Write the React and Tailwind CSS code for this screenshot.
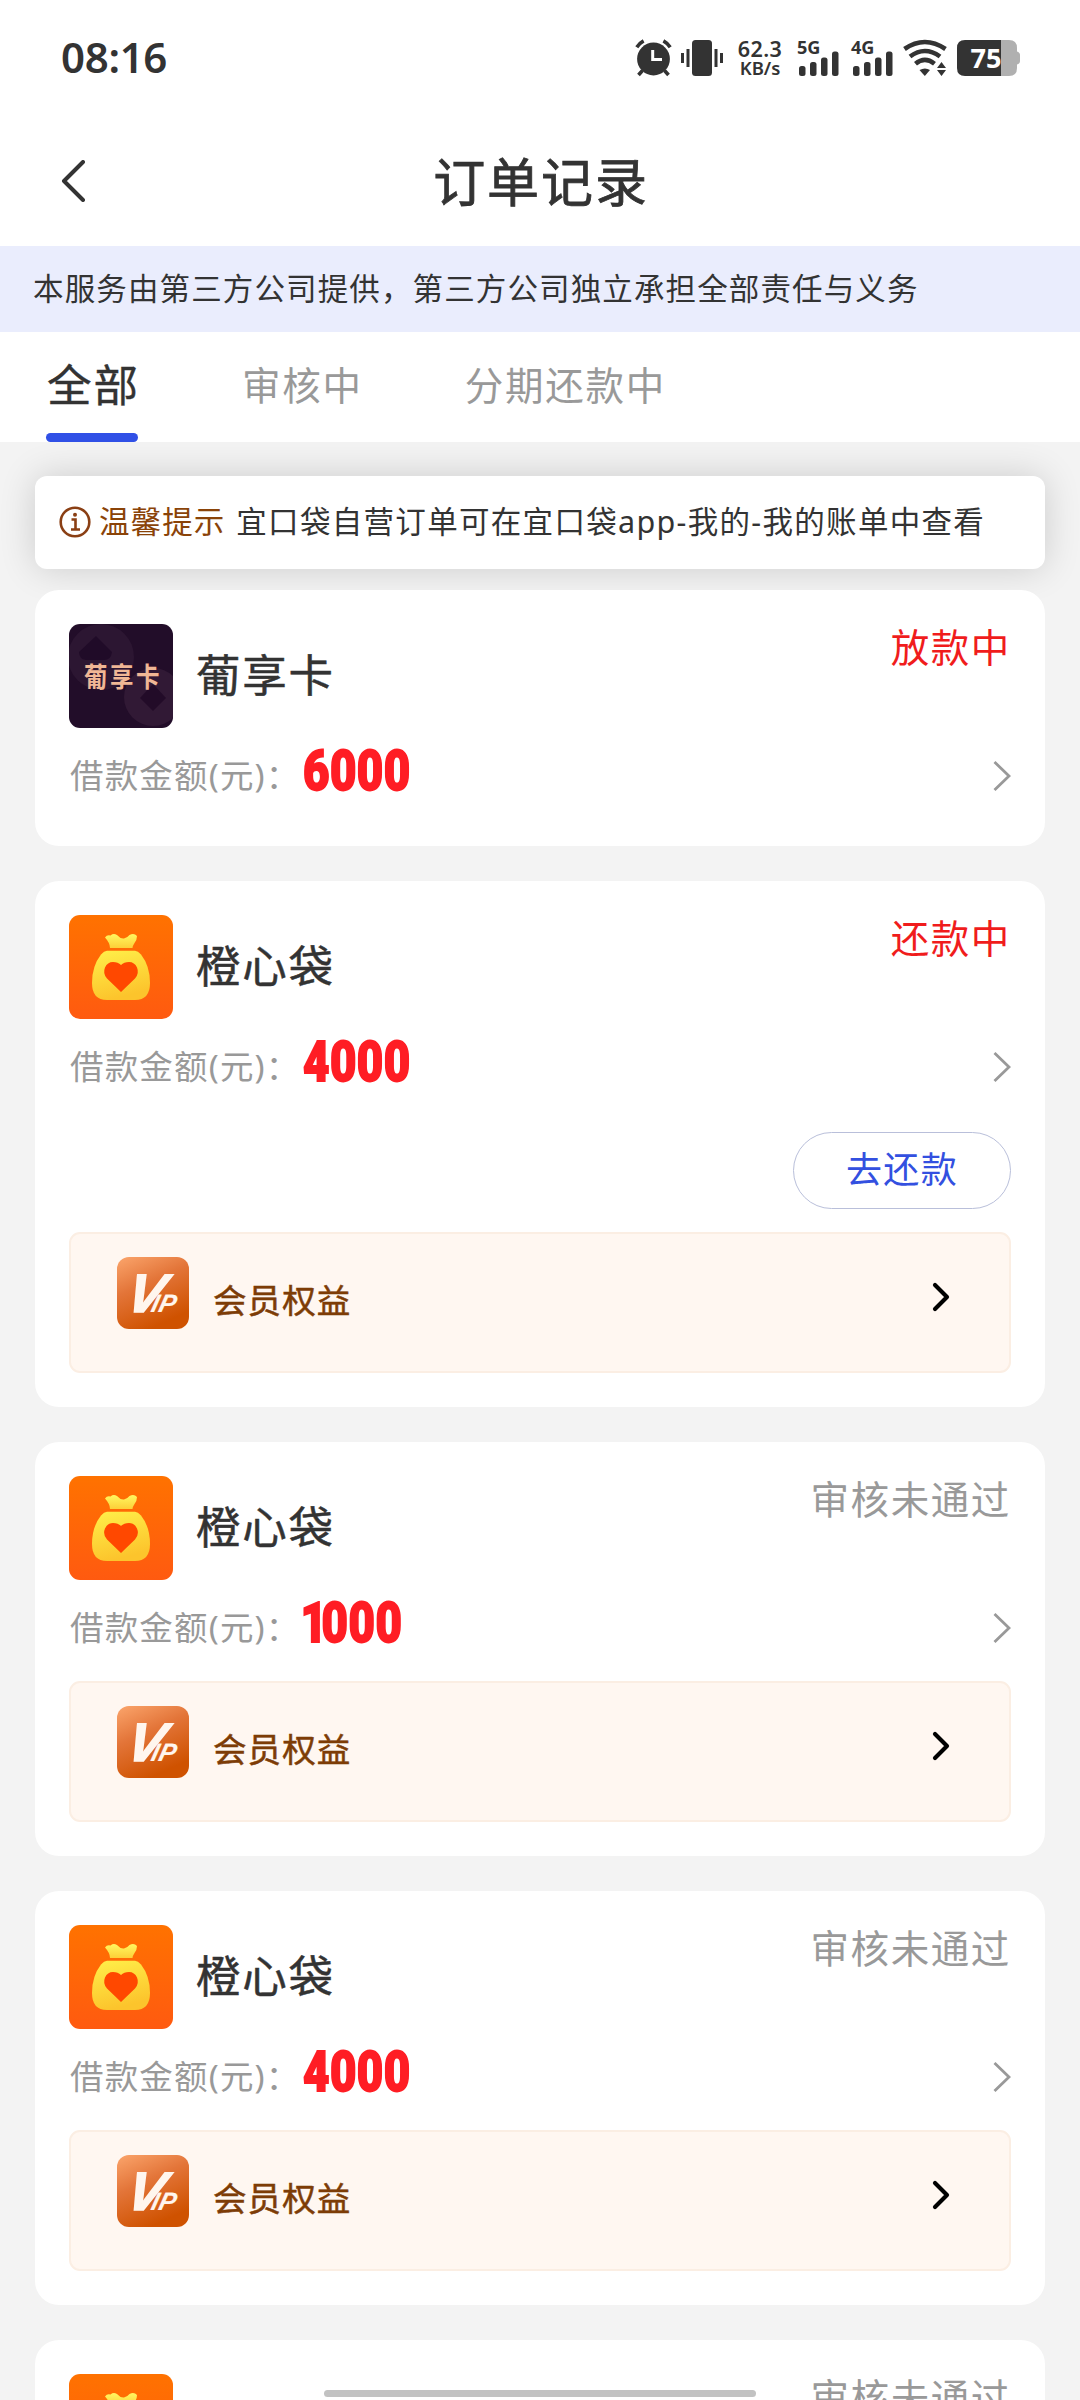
import React from 'react';

const orders = [
  { id: 1, logo: 'card', name: '葡享卡', amount: '6000', status: '放款中', active: true },
  { id: 2, logo: 'bag', name: '橙心袋', amount: '4000', status: '还款中', active: true, repay: true, vip: true },
  { id: 3, logo: 'bag', name: '橙心袋', amount: '1000', status: '审核未通过', vip: true },
  { id: 4, logo: 'bag', name: '橙心袋', amount: '4000', status: '审核未通过', vip: true },
  { id: 5, logo: 'bag', name: '橙心袋', amount: '4000', status: '审核未通过', vip: true },
];

const AlarmIcon = () => (
  <svg width="38" height="38" viewBox="0 0 38 38" fill="none" stroke="#333" strokeWidth="3.2">
    <circle cx="18.5" cy="20" r="16.4" fill="#333" stroke="none" />
    <path d="M1.800 8.200Q4.500 4 8.600 1.800M35.200 8.200Q32.500 4 28.400 1.800" strokeWidth="3.6" />
    <path d="M7.500 31.500L3.500 36M29.500 31.500L33.500 36" strokeWidth="3.6" />
    <path d="M17.700 11V20.400H27" stroke="#fff" strokeWidth="3" />
  </svg>
);

const VibrateIcon = () => (
  <svg width="42" height="38" viewBox="0 0 42 38" fill="#333">
    <rect x="11" y="1" width="20" height="36" rx="3.5" />
    <rect x="5.500" y="10" width="3" height="18" />
    <rect x="0" y="14" width="3" height="10" />
    <rect x="33.500" y="10" width="3" height="18" />
    <rect x="39" y="14" width="3" height="10" />
  </svg>
);

const Signal = ({ label }) => (
  <svg width="43" height="38" viewBox="0 0 43 38" fill="#333" overflow="visible">
    <text x="0" y="15" fontSize="18.500" fontWeight="700" fontFamily="'Noto Sans', sans-serif" textLength="23.500" lengthAdjust="spacingAndGlyphs">{label}</text>
    <rect x="2" y="27" width="6.500" height="10" rx="2.500" />
    <rect x="13" y="23" width="6.500" height="14" rx="2.500" />
    <rect x="24" y="18.500" width="6.500" height="18.500" rx="2.500" />
    <rect x="35" y="12.500" width="6.500" height="24.500" rx="2.500" />
  </svg>
);

const WifiIcon = () => (
  <svg width="45" height="38" viewBox="0 0 45 38" fill="none" stroke="#333" strokeWidth="4.600">
    <path d="M1.500 10Q21.700 -4 42.500 10" />
    <path d="M7 17.500Q21.700 6.500 37 17.500" />
    <path d="M12.500 24.800Q21.700 17 31.500 24.800" />
    <path d="M16.500 31Q22 28 27 31L21.800 37Z" fill="#333" stroke="none" />
    <path d="M38.500 23L43 29H34ZM38.500 37L34 31H43Z" fill="#333" stroke="none" />
  </svg>
);

const BatteryIcon = () => (
  <svg width="63" height="38" viewBox="0 0 63 38">
    <path d="M44 1H52Q60 1 60 9V12.500Q63 13.500 63 16V22Q63 24.500 60 25.500V29Q60 37 52 37H44Z" fill="#b0b0b0" />
    <path d="M8 1H44V37H8Q0 37 0 29V9Q0 1 8 1Z" fill="#333" />
    <text x="13.500" y="28.600" fontSize="27.500" fontWeight="700" fill="#fff" fontFamily="'Noto Sans', sans-serif" textLength="31" lengthAdjust="spacingAndGlyphs">75</text>
  </svg>
);

const CardLogo = () => (
  <svg width="104" height="104" viewBox="0 0 104 104" className="rounded-[11px]">
    <rect width="104" height="104" fill="#220d29" />
    <circle cx="32" cy="33" r="33" fill="#2c1632" />
    <circle cx="84" cy="73" r="29" fill="#311935" />
    <path d="M27 12L43 28Q42 36 35 36H17Q10 35 10 28Z" fill="#200b28" />
    <path d="M84 60L97 74L84 87L71 74Z" fill="#220b28" />
    <text x="15" y="62.500" fontSize="23.500" letterSpacing="2.500" fontWeight="700" fill="#f0b795" fontFamily="'Noto Sans CJK SC', sans-serif" transform="translate(0 -11) scale(1 1.180)">葡享卡</text>
  </svg>
);

const BagLogo = () => (
  <svg width="104" height="104" viewBox="0 0 104 104" className="rounded-[11px]">
    <defs>
      <linearGradient id="bagBg" x1="0" y1="0" x2="0" y2="1">
        <stop offset="0" stopColor="#ff7200" />
        <stop offset="1" stopColor="#ff5a10" />
      </linearGradient>
      <linearGradient id="bagFill" x1="0" y1="0" x2="0.300" y2="1">
        <stop offset="0" stopColor="#fff04a" />
        <stop offset="1" stopColor="#fcc42c" />
      </linearGradient>
      <linearGradient id="bagTop" x1="0" y1="0" x2="0" y2="1">
        <stop offset="0" stopColor="#fff860" />
        <stop offset="1" stopColor="#fdcf38" />
      </linearGradient>
    </defs>
    <rect width="104" height="104" fill="url(#bagBg)" />
    <path d="M36 22.500Q38 19.500 41.500 20.500Q44.500 18 48 20Q51.500 24 55 23.500Q58 23 60.500 20Q65 17.500 68 21Q68 25 65.500 28Q63.500 31 63.500 33H41Q41 28 36 22.500Z" fill="url(#bagTop)" />
    <path d="M38 35.800H66Q69 35.800 72 39.500Q81 51 81 68Q81 85 66 85H38Q23 85 23 68Q23 51 32 39.500Q35 35.800 38 35.800Z" fill="url(#bagFill)" />
    <path d="M52 77L38 63.500Q33.500 58.500 36 52.500Q38.500 47 44 47Q49 47 52 50Q55 47 60 47Q65.500 47 68 52.500Q70.500 58.500 66 63.500Z" fill="#ff4800" />
  </svg>
);

const VipLogo = () => (
  <svg width="72" height="72" viewBox="0 0 72 72" className="rounded-[12px]">
    <defs>
      <linearGradient id="vipBg" x1="0" y1="0" x2="0.450" y2="1">
        <stop offset="0" stopColor="#fba56c" />
        <stop offset="0.450" stopColor="#e37539" />
        <stop offset="1" stopColor="#cf5200" />
      </linearGradient>
    </defs>
    <rect width="72" height="72" fill="url(#vipBg)" />
    <text x="7" y="0" transform="translate(0 54.500) skewX(-14)" fontSize="54" fill="#fff6ee" stroke="#fff6ee" strokeWidth="1.600" fontFamily="'Liberation Sans Narrow', 'Liberation Sans', sans-serif" fontWeight="700" fontStyle="italic">
      V<tspan dx="-10" fontSize="25" strokeWidth="0.200" fontFamily="'Liberation Sans', sans-serif" letterSpacing="0.500">IP</tspan>
    </text>
  </svg>
);

const StatusBar = () => (
  <div className="flex h-[116px] items-center pl-[61px] pr-[60px]">
    <span className="-mt-[2px] text-[42px] leading-none font-semibold tracking-[-0.008em]">08:16</span>
    <div className="ml-auto flex items-center">
      <AlarmIcon />
      <div className="ml-2"><VibrateIcon /></div>
      <div className="ml-[14px] flex w-[46px] flex-col items-center text-[18.500px] leading-[19px] font-semibold">
        <span className="text-[21.500px] tracking-[0.02em]">62.3</span>
        <span>KB/s</span>
      </div>
      <div className="ml-[14px]"><Signal label="5G" /></div>
      <div className="ml-[11px]"><Signal label="4G" /></div>
      <div className="ml-[9px]"><WifiIcon /></div>
      <div className="ml-[9px]"><BatteryIcon /></div>
    </div>
  </div>
);

// the leading 1 is narrower than the other digits
const Amount = ({ value }) => (
  <span className="mt-[3px] inline-block origin-left scale-x-[0.83] font-[Roboto] text-[55px] leading-none font-black tracking-[0.01em] text-[#ff1d24] [-webkit-text-stroke:1.8px_#ff1d24]">
    {value.startsWith('1') ? <><span className="-ml-[3px] -mr-[7px]">1</span>{value.slice(1)}</> : value}
  </span>
);

const VipRow = () => (
  <div className="flex h-[141px] items-start rounded-[11px] border-2 border-[#fbeee3] bg-[#fff7f1] pt-[23px] pl-[46px] pr-[59px]">
    <VipLogo />
    <span className="ml-6 mt-[18px] text-[33.500px] leading-[50px] tracking-[0.032em] text-[#7d3c06] [-webkit-text-stroke:0.5px_#7d3c06]">会员权益</span>
    <svg className="ml-auto mt-[25px]" width="18" height="30" viewBox="0 0 18 30" fill="none" stroke="#000" strokeWidth="4.200" strokeLinecap="round" strokeLinejoin="round">
      <path d="M3 3L15 15L3 27" />
    </svg>
  </div>
);

const OrderCard = ({ order }) => (
  <div className="rounded-[24px] bg-white p-[34px]">
    <div className="flex h-[104px] items-center">
      {order.logo === 'card' ? <CardLogo /> : <BagLogo />}
      <span className="-mt-[2px] ml-[23px] text-[44.500px] leading-none tracking-[0.038em] [-webkit-text-stroke:0.5px_#333]">{order.name}</span>
      <span className={`ml-auto mt-[3px] self-start text-[38.500px] leading-[40px] tracking-[0.042em] ${order.active ? 'text-[#f01c1c]' : 'text-[#999]'}`}>{order.status}</span>
    </div>
    <div className="flex h-[84px] items-center">
      <span className="w-[234px] shrink-0 whitespace-nowrap pt-[11px] pl-[1px] text-[33.500px] leading-none tracking-[0.035em] text-[#999]">借款金额(元)：</span>
      <Amount value={order.amount} />
      <svg className="ml-auto mt-3" width="18" height="32" viewBox="0 0 18 32" fill="none" stroke="#999" strokeWidth="2.800">
        <path d="M1.500 2L16 16L1.500 30" />
      </svg>
    </div>
    {order.repay && (
      <div className="mt-[29px] mb-[23px] flex justify-end">
        <button className="h-[77px] w-[218px] rounded-full border border-[#b9bfda] pb-[2px] text-[36px] leading-none tracking-[0.035em] text-[#3350e0]">去还款</button>
      </div>
    )}
    {order.vip && <div className={order.repay ? '' : 'mt-[17px]'}><VipRow /></div>}
  </div>
);

export default function App() {
  return (
    <div className="relative h-[2400px] w-[1080px] overflow-hidden bg-[#f3f3f3] font-['Noto_Sans','Noto_Sans_CJK_SC',sans-serif] text-[#333]">
      <div className="bg-white">
        <StatusBar />
        <div className="grid h-[130px] grid-cols-[1fr_auto_1fr] items-center px-[60px]">
          <svg width="28" height="42" viewBox="0 0 28 42" fill="none" stroke="#333" strokeWidth="4" strokeLinecap="round" strokeLinejoin="round">
            <path d="M23 2L4 21L23 40" />
          </svg>
          <h1 className="pt-[1px] pl-[2px] text-[52px] leading-none font-normal tracking-[0.037em] [-webkit-text-stroke:0.8px_#333]">订单记录</h1>
        </div>
      </div>

      <div className="flex h-[86px] items-center bg-[#eaedfd] px-[33px] pb-[2px] text-[30.500px] leading-none tracking-[0.037em] whitespace-nowrap">
        本服务由第三方公司提供，第三方公司独立承担全部责任与义务
      </div>

      <div className="flex h-[110px] items-stretch bg-white pl-[46px] leading-none tracking-[0.035em]">
        <div className="flex w-[92px] flex-col justify-between">
          <span className="pt-[31px] pl-[1px] text-[44.500px] tracking-[0.045em] whitespace-nowrap [-webkit-text-stroke:0.4px_#333]">全部</span>
          <div className="h-[9px] rounded-full bg-[#3050e6]" />
        </div>
        <span className="ml-[104px] pt-[34px] text-[38.500px] tracking-[0.045em] text-[#999]">审核中</span>
        <span className="ml-[102px] pt-[34px] text-[38.500px] tracking-[0.045em] text-[#999]">分期还款中</span>
      </div>

      <div className="flex flex-col px-[35px] pt-[34px]">
        <div className="flex h-[93px] items-center rounded-[12px] bg-white pl-6 pb-[2px] text-[30.500px] leading-none tracking-[0.035em] whitespace-nowrap shadow-[0_0_36px_rgba(0,0,0,0.16)]">
          <svg width="32" height="32" viewBox="0 0 32 32" fill="none" stroke="#8a3f14" strokeWidth="2.600">
            <circle cx="16" cy="16" r="14.300" />
            <path d="M12.500 13.500H16.500V23M12 23.500H21" />
            <circle cx="16" cy="8.800" r="2" fill="#8a3f14" stroke="none" />
          </svg>
          <span className="ml-2 text-[#8a4308]">温馨提示</span>
          <span className="ml-[11px] tracking-[0.043em]">宜口袋自营订单可在宜口袋app-我的-我的账单中查看</span>
        </div>

        <div className="mt-[21px] flex flex-col gap-[35px]">
          {orders.map((order) => (
            <OrderCard key={order.id} order={order} />
          ))}
        </div>
      </div>

      {/* gesture bar over the list */}
      <div className="absolute bottom-[3px] left-[324px] h-[7px] w-[432px] rounded-full bg-[#c2c2c2]" />
    </div>
  );
}
